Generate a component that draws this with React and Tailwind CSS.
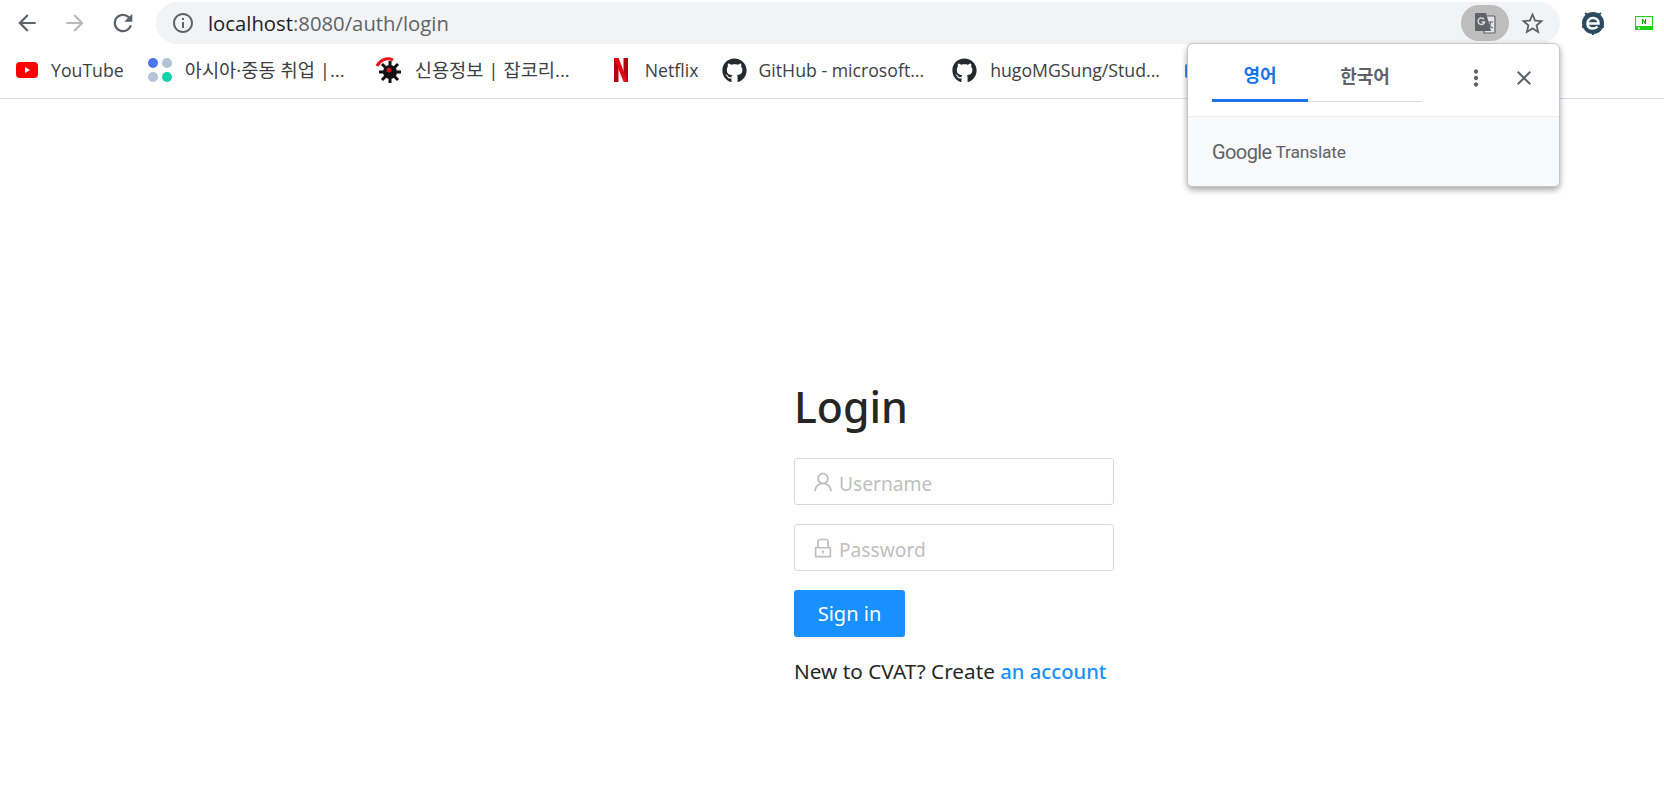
import React from 'react';
import { MdArrowBack, MdArrowForward, MdRefresh, MdInfoOutline, MdStarBorder, MdClose, MdMoreVert } from 'react-icons/md';
import { FaGithub } from 'react-icons/fa';
import { AiOutlineUser, AiOutlineLock } from 'react-icons/ai';

const UI_FONT = "font-['Open_Sans','Noto_Sans_CJK_KR',sans-serif]";

const YouTubeIcon = () => (
  <svg width="22" height="16" viewBox="0 0 22 16">
    <rect width="22" height="16" rx="4" fill="#f00" />
    <path d="M9 5l5 3-5 3z" fill="#fff" />
  </svg>
);

const DotsIcon = () => (
  <svg width="26" height="26" viewBox="0 0 26 26">
    <circle cx="6" cy="6" r="5" fill="#4a76ee" />
    <circle cx="20" cy="6" r="5" fill="#b4c3d8" />
    <circle cx="6" cy="20" r="5" fill="#b4c3d8" />
    <circle cx="20" cy="20" r="5" fill="#14d2a8" />
  </svg>
);

const GearIcon = () => (
  <svg width="26" height="26" viewBox="0 0 26 26">
    <path d="M1 9C4 3 11 0 17 3" fill="none" stroke="#e8141c" strokeWidth="3" />
    <circle cx="14" cy="15" r="7" fill="#111" />
    <path d="M14 4v22M3 15h22M6 7l16 16M22 7L6 23" stroke="#111" strokeWidth="3" />
    <circle cx="13" cy="13" r="2.5" fill="#d2141c" />
  </svg>
);

const NetflixIcon = () => (
  <svg width="14" height="24" viewBox="0 0 14 24">
    <path d="M0 0h4.500v24L0 24z" fill="#b1060f" />
    <path d="M9.500 0H14v24l-4.500-.6z" fill="#b1060f" />
    <path d="M0 0h4.500L14 24l-4.500-.6z" fill="#e50914" />
  </svg>
);

const BlueIcon = () => <div className="h-[14px] w-[16px] rounded-[2px] bg-[#4285f4]" />;

const TranslateIcon = () => (
  <svg width="24" height="24" viewBox="0 0 24 24">
    <path d="M11 5h10a1 1 0 0 1 1 1v15a1 1 0 0 1-1 1H11z" fill="#e4e4e4" stroke="#5f6368" strokeWidth="1.200" />
    <path d="M3 2h10l5 18H3a1 1 0 0 1-1-1V3a1 1 0 0 1 1-1z" fill="#5f6368" />
    <path d="M11 8.200A3.300 3.300 0 1 0 11.600 11H8.500" fill="none" stroke="#d8d8d8" strokeWidth="1.500" />
    <path d="M15 11h5M17.500 11c0 3-1.500 5-3 6M15.500 13c.8 2 2.500 3.500 4.500 4" fill="none" stroke="#5f6368" strokeWidth="1.100" />
  </svg>
);

const EvernoteIcon = () => (
  <svg width="26" height="26" viewBox="0 0 26 26">
    <path d="M5 3l4 3M21 3l-4 3M2 17l3-1M24 17l-3-1M13 25v-3" stroke="#2c4a60" strokeWidth="2" />
    <circle cx="13" cy="13" r="11" fill="#2c4a60" />
    <path d="M7.500 13.500h11c0-3.500-2.200-5.500-5.500-5.500s-5.500 2.300-5.500 5.500 2.300 5 5.500 5c2 0 3.500-.8 4.500-2" fill="none" stroke="#fff" strokeWidth="2.600" />
  </svg>
);

const NaverIcon = () => (
  <svg width="18" height="14" viewBox="0 0 18 14">
    <rect x="0.500" y="0.500" width="17" height="13" fill="#fff" stroke="#22d31c" />
    <rect x="0" y="10" width="18" height="4" fill="#22d31c" />
    <rect x="3" y="11.500" width="2" height="1.500" fill="#fff" />
    <path d="M7 8V3h1l2 3V3h1v5h-1L8 5v3z" fill="#109c0c" />
  </svg>
);

const bookmarks = [
  { label: 'YouTube', icon: <YouTubeIcon />, iconBox: 'w-[22px] ml-[16px]', text: 'ml-[13px] text-[17.7px]' },
  { label: '아시아·중동 취업 |...', icon: <DotsIcon />, iconBox: 'w-[26px] ml-[23px]', text: 'ml-[12px] text-[18.7px]' },
  { label: '신용정보 | 잡코리...', icon: <GearIcon />, iconBox: 'w-[26px] ml-[31px]', text: 'ml-[13px] text-[18.7px]' },
  { label: 'Netflix', icon: <NetflixIcon />, iconBox: 'w-[14px] ml-[44px]', text: 'ml-[17px] text-[17.7px]' },
  { label: 'GitHub - microsoft...', icon: <FaGithub size={25} color="#24292e" />, iconBox: 'w-[25px] ml-[24px]', text: 'ml-[11px] text-[17.7px]' },
  { label: 'hugoMGSung/Stud...', icon: <FaGithub size={25} color="#24292e" />, iconBox: 'w-[25px] ml-[28px]', text: 'ml-[13px] text-[17.7px]' },
  { label: '', icon: <BlueIcon />, iconBox: 'w-[16px] ml-[25px]', text: '' },
];

const Toolbar = () => (
  <div className="flex h-[46px] items-start bg-white pt-[2px]">
    <div className="flex h-[42px] w-[156px] items-center pl-[14px] text-[#5f6368]">
      <MdArrowBack size={26} />
      <MdArrowForward size={26} className="ml-[22px] text-[#b8babd]" />
      <MdRefresh size={28} className="ml-[21px]" />
    </div>
    <div className="flex h-[42px] w-[1404px] items-center rounded-full bg-[#f1f3f4] pl-[15px] pr-[14px]">
      <MdInfoOutline size={24} className="text-[#5f6368]" />
      <div className="ml-[13px] text-[20.3px] text-[#5f6368]">
        <span className="text-[#202124]">localhost</span>:8080/auth/login
      </div>
      <div className="ml-auto flex h-[36px] w-[48px] items-center justify-center rounded-full bg-[#bdbdbd]">
        <TranslateIcon />
      </div>
      <MdStarBorder size={27} className="ml-[10px] text-[#5f6368]" />
    </div>
    <div className="flex h-[42px] flex-1 items-center pl-[20px]">
      <EvernoteIcon />
      <div className="ml-[29px]">
        <NaverIcon />
      </div>
    </div>
  </div>
);

const BookmarkBar = () => (
  <div className="flex h-[53px] items-center border-b border-[#dadce0] bg-white pb-[3px]">
    {bookmarks.map((b, i) => (
      <div key={i} className="flex items-center">
        <div className={`flex justify-center ${b.iconBox}`}>{b.icon}</div>
        {b.label && <span className={`text-[#3c4043] whitespace-nowrap ${b.text}`}>{b.label}</span>}
      </div>
    ))}
  </div>
);

const TranslatePopup = () => (
  <div className="absolute left-[1187px] top-[43px] h-[144px] w-[373px] overflow-hidden rounded-[6px] border border-[#c4c6c8] bg-white shadow-[0_3px_6px_rgba(0,0,0,0.35)]">
    <div className="flex h-[73px] items-start border-b border-[#eceef0] pl-[24px]">
      <div className="flex h-[58px] w-[210px] border-b border-[#dadce0]">
        <div className="flex h-[58px] w-[96px] shrink-0 items-center justify-center border-b-[3px] border-[#1a73e8] pt-[8px] text-[18px] font-semibold text-[#1a73e8]">영어</div>
        <div className="flex h-[57px] w-[114px] items-center justify-center pt-[8px] text-[18px] font-semibold text-[#5f6368]">한국어</div>
      </div>
      <MdMoreVert size={26} className="ml-[41px] mt-[21px] text-[#5f6368]" />
      <MdClose size={24} className="ml-[23px] mt-[22px] text-[#5f6368]" />
    </div>
    <div className="flex h-[70px] items-center bg-[#f8f9fa] pl-[24px] text-[#5f6368]">
      <span className="font-['Roboto',sans-serif] text-[20px] tracking-[-0.6px]">Google</span>
      <span className="ml-[4px] font-['Roboto',sans-serif] text-[17.4px] tracking-[-0.2px]">Translate</span>
    </div>
  </div>
);

const Field = ({ icon, placeholder, className }) => (
  <div className={`flex h-[47px] w-[320px] items-center rounded-[3px] border border-[#d9d9d9] bg-white pl-[16px] ${className}`}>
    {icon}
    <span className="ml-[4px] pt-[5px] text-[19.2px] text-[#bfbfbf]">{placeholder}</span>
  </div>
);

const LoginForm = () => (
  <div className="pl-[794px] pt-[277px] font-['Noto_Sans',sans-serif]">
    <h1 className="text-[42.8px] font-medium leading-[62px] text-[#262626]">Login</h1>
    <Field className="mt-[20px]" placeholder="Username" icon={<AiOutlineUser size={24} className="text-[#bfbfbf]" />} />
    <Field className="mt-[19px]" placeholder="Password" icon={<AiOutlineLock size={24} className="text-[#bfbfbf]" />} />
    <button className="mt-[19px] block h-[47px] w-[111px] rounded-[3px] bg-[#1890ff] text-center text-[20px] text-white shadow-[0_2px_0_rgba(0,0,0,0.04)]">Sign in</button>
    <p className="mt-[20px] text-[20.75px] leading-[28px] text-[#262626]">
      New to CVAT? Create <a href="#" className="text-[20.2px] font-medium text-[#1890ff]">an account</a>
    </p>
  </div>
);

export default function App() {
  return (
    <div className={`relative h-[791px] overflow-hidden bg-white ${UI_FONT}`}>
      <Toolbar />
      <BookmarkBar />
      <LoginForm />
      <TranslatePopup />
    </div>
  );
}
